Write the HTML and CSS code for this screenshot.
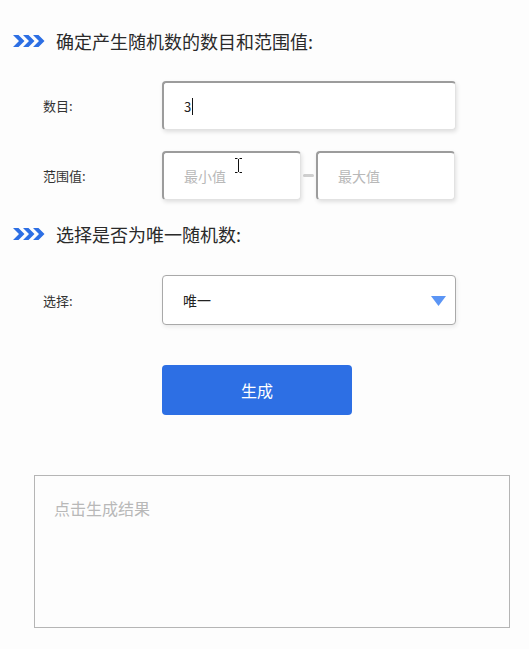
FILE: index.html
```html
<!DOCTYPE html>
<html lang="zh">
<head>
<meta charset="utf-8">
<title>随机数生成</title>
<link rel="stylesheet" href="styles.css">
</head>
<body>
<div class="page">
  <h2 class="heading heading-first">
    <svg class="chev" width="32" height="12" viewBox="0 0 32 12"><path d="M0 0h5.5l6 6-6 6H0l6-6z M10 0h5.5l6 6-6 6H10l6-6z M20 0h5.5l6 6-6 6H20l6-6z" fill="#2d6fe4"/></svg>
    <span>确定产生随机数的数目和范围值:</span>
  </h2>
  <div class="row row-count">
    <label class="label">数目:</label>
    <div class="field wide"><span class="value">3</span><span class="caret"></span></div>
  </div>
  <div class="row row-range">
    <label class="label">范围值:</label>
    <div class="range">
      <div class="field half"><span class="ph">最小值</span>
        <svg class="ibeam" width="7" height="15" viewBox="0 0 7 15"><path d="M0 .5h2.5M4.5 .5H7M3.5 1v13M0 14.5h2.5M4.5 14.5H7" stroke="#111" stroke-width="1"/></svg>
      </div>
      <span class="dash"></span>
      <div class="field half"><span class="ph">最大值</span></div>
    </div>
  </div>
  <h2 class="heading heading-second">
    <svg class="chev" width="32" height="12" viewBox="0 0 32 12"><path d="M0 0h5.5l6 6-6 6H0l6-6z M10 0h5.5l6 6-6 6H10l6-6z M20 0h5.5l6 6-6 6H20l6-6z" fill="#2d6fe4"/></svg>
    <span>选择是否为唯一随机数:</span>
  </h2>
  <div class="row row-select">
    <label class="label">选择:</label>
    <div class="select">
      <span class="value sel">唯一</span>
      <svg class="tri" width="15" height="10" viewBox="0 0 15 10"><path d="M0 0h15L7.5 10z" fill="#5b95f5"/></svg>
    </div>
  </div>
  <div class="actions">
    <button class="btn">生成</button>
  </div>
  <div class="result"><span class="ph result-ph">点击生成结果</span></div>
</div>
</body>
</html>
```
FILE: styles.css
```css
html, body {
  margin: 0;
  padding: 0;
  background: #fdfdfd;
}
body {
  font-family: "Noto Sans CJK SC", "Noto Sans", sans-serif;
  color: #333;
}
.page {
  width: 529px;
  display: flex;
  flex-direction: column;
}
.heading {
  margin: 0;
  display: flex;
  align-items: center;
  gap: 11px;
  padding-left: 13px;
  height: 24px;
  font-size: 18px;
  font-weight: normal;
  color: #2a2a2a;
  line-height: 24px;
}
.heading-first { margin-top: 29px; }
.heading-second { margin-top: 22px; }
.chev { flex: none; }
.row {
  display: flex;
  align-items: center;
  padding-left: 43px;
}
.row-count { margin-top: 28px; }
.row-range { margin-top: 21px; }
.row-select { margin-top: 29px; }
.label {
  width: 119px;
  font-size: 13px;
  color: #333;
}
.field {
  position: relative;
  box-sizing: border-box;
  height: 49px;
  border-radius: 4px;
  border-top: 2px solid #9c9c9c;
  border-left: 2px solid #9c9c9c;
  border-right: 1px solid #e2e2e2;
  border-bottom: 1px solid #e2e2e2;
  background: #fff;
  box-shadow: 1px 2px 4px rgba(0,0,0,0.12);
  display: flex;
  align-items: center;
  padding-left: 20px;
  font-size: 13px;
}
.wide { width: 294px; }
.half { width: 139px; }
.range {
  display: flex;
  align-items: center;
  gap: 2px;
}
.dash {
  width: 11px;
  height: 3px;
  border-radius: 2px;
  background: #cfcfcf;
}
.value { color: #222; font-size: 13px; }
.sel { font-size: 14px; }
.caret {
  width: 1px;
  height: 17px;
  background: #111;
  margin-left: 1px;
}
.ph { color: #b8b8b8; font-size: 14px; }
.ibeam {
  position: absolute;
  left: 71px;
  top: 5px;
}
.select {
  box-sizing: border-box;
  width: 294px;
  height: 50px;
  border: 1px solid #a9a9a9;
  border-radius: 4px;
  background: #fff;
  box-shadow: 1px 2px 4px rgba(0,0,0,0.08);
  display: flex;
  align-items: center;
  justify-content: space-between;
  padding: 0 9px 0 20px;
}
.tri { margin-top: 1px; }
.actions {
  margin-top: 40px;
  padding-left: 162px;
}
.btn {
  width: 190px;
  height: 50px;
  border: none;
  border-radius: 4px;
  background: #2d6fe4;
  color: #fff;
  font-family: inherit;
  font-size: 16px;
  padding: 0;
}
.result {
  box-sizing: border-box;
  margin: 60px 0 0 34px;
  width: 476px;
  height: 153px;
  border: 1px solid #b5b5b5;
  background: #fdfdfd;
  padding: 21px 0 0 19px;
  line-height: 22px;
}
.result-ph { font-size: 16px; }
```
